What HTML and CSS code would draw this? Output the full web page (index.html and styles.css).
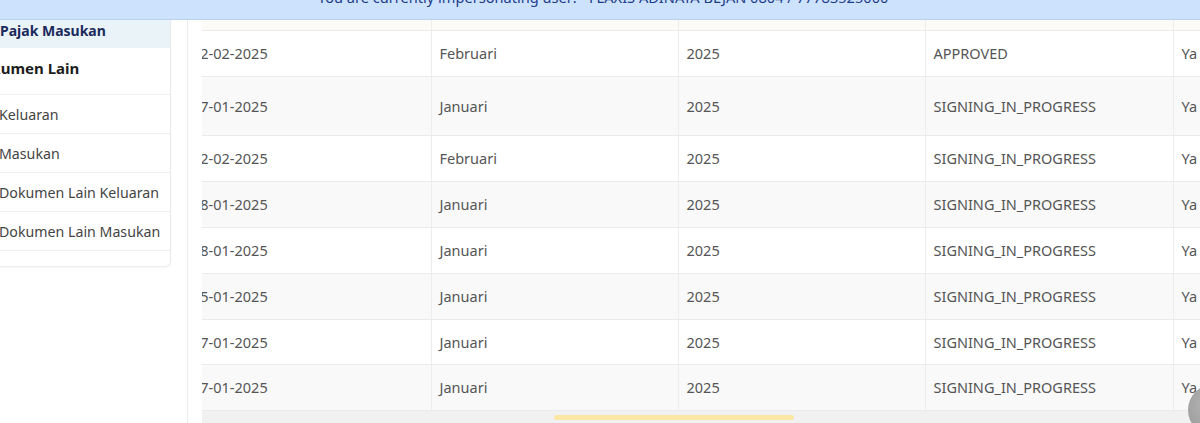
FILE: index.html
```html
<!DOCTYPE html>
<html lang="id">
<head>
  <meta charset="UTF-8">
  <meta name="viewport" content="width=device-width, initial-scale=1.0">
  <title>Dokumen Pajak</title>
  <link rel="stylesheet" href="styles.css">
</head>
<body>
  <div class="impersonate-bar">
    <div class="impersonate-text">You are currently impersonating user: - FLAXIS ADINATA BEJAN 0804 / 77783525000</div>
  </div>

  <div class="page">
    <aside class="sidebar">
      <div class="menu-item active">Pajak Masukan</div>
      <div class="menu-title">Dokumen Lain</div>
      <div class="menu-item">Keluaran</div>
      <div class="menu-item">Masukan</div>
      <div class="menu-item">Dokumen Lain Keluaran</div>
      <div class="menu-item">Dokumen Lain Masukan</div>
    </aside>

    <main class="content">
      <div class="table-scroll">
        <table class="doc-table">
          <colgroup>
            <col class="col-date">
            <col class="col-month">
            <col class="col-year">
            <col class="col-status">
            <col class="col-flag">
          </colgroup>
          <thead>
            <tr class="head-row">
              <th></th><th></th><th></th><th></th><th></th>
            </tr>
          </thead>
          <tbody>
            <tr><td>12-02-2025</td><td>Februari</td><td>2025</td><td>APPROVED</td><td>Ya</td></tr>
            <tr class="tall"><td>17-01-2025</td><td>Januari</td><td>2025</td><td>SIGNING_IN_PROGRESS</td><td>Ya</td></tr>
            <tr><td>12-02-2025</td><td>Februari</td><td>2025</td><td>SIGNING_IN_PROGRESS</td><td>Ya</td></tr>
            <tr><td>28-01-2025</td><td>Januari</td><td>2025</td><td>SIGNING_IN_PROGRESS</td><td>Ya</td></tr>
            <tr><td>28-01-2025</td><td>Januari</td><td>2025</td><td>SIGNING_IN_PROGRESS</td><td>Ya</td></tr>
            <tr><td>15-01-2025</td><td>Januari</td><td>2025</td><td>SIGNING_IN_PROGRESS</td><td>Ya</td></tr>
            <tr class="short"><td>17-01-2025</td><td>Januari</td><td>2025</td><td>SIGNING_IN_PROGRESS</td><td>Ya</td></tr>
            <tr><td>17-01-2025</td><td>Januari</td><td>2025</td><td>SIGNING_IN_PROGRESS</td><td>Ya</td></tr>
          </tbody>
        </table>
        <div class="h-scrollbar">
          <div class="h-thumb"></div>
        </div>
      </div>
    </main>
  </div>

  <div class="float-btn"></div>
</body>
</html>
```

FILE: styles.css
```css
html, body {
  margin: 0;
  height: 423px;
  overflow: hidden;
}

body {
  font-family: "Noto Sans", "Open Sans", sans-serif;
  font-size: 14px;
  color: #555;
  background-color: #fff;
}

.impersonate-bar {
  height: 19px;
  overflow: hidden;
  background-color: #cde2fc;
  border-bottom: 1px solid #b9d2f0;
  text-align: center;
}

.impersonate-text {
  margin-top: -13px;
  padding-left: 6px;
  font-size: 14.6px;
  line-height: 20px;
  color: #1d3d8a;
  white-space: nowrap;
}

.page {
  display: flex;
  height: 403px;
}

/* Sidebar */
.sidebar {
  width: 170px;
  height: 246px;
  flex-shrink: 0;
  overflow: hidden;
  background-color: #fff;
  border-right: 1px solid #e8e8e8;
  border-bottom: 1px solid #eee;
  border-bottom-right-radius: 6px;
  box-shadow: 0 1px 2px rgba(0, 0, 0, 0.04);
}

.menu-item {
  height: 38px;
  line-height: 40px;
  margin-left: -1px;
  border-bottom: 1px solid #f0f0f0;
  color: #444;
  font-size: 14.2px;
  white-space: nowrap;
}

.menu-item.active {
  height: 28px;
  line-height: 21px;
  margin-left: 0;
  background-color: #eaf3f8;
  color: #1b2a5c;
  font-weight: 700;
  font-size: 14px;
  border-bottom: none;
}

.menu-title {
  height: 46px;
  line-height: 41px;
  margin-left: -29px;
  border-bottom: 1px solid #f0f0f0;
  color: #1d1d1d;
  font-weight: 700;
  font-size: 15px;
  white-space: nowrap;
}

/* Content */
.content {
  flex: 1;
  min-width: 0;
  margin-left: 16px;
  padding-left: 14px;
  border-left: 1px solid #ececec;
}

.table-scroll {
  height: 403px;
  overflow: hidden;
}

.doc-table {
  width: 1300px;
  margin-left: -18px;
  border-collapse: collapse;
  table-layout: fixed;
  font-size: 14.5px;
}

.col-date,
.col-month,
.col-year {
  width: 247px;
}

.col-status {
  width: 248px;
}

.doc-table th,
.doc-table td {
  padding: 0 8px;
  text-align: left;
  white-space: nowrap;
  border-bottom: 1px solid #ebebeb;
  border-right: 1px solid #ededed;
}

.head-row th {
  height: 10px;
  background-color: #fdfbf8;
}

.doc-table td {
  height: 45px;
  line-height: 21px;
}

.doc-table tbody tr:nth-child(even) td {
  background-color: #f9f9f9;
}

.doc-table tr.tall td {
  height: 58px;
}

.doc-table tr.short td {
  height: 44px;
}

.h-scrollbar {
  height: 13px;
  margin-right: -20px;
  background-color: #f1f1f1;
  padding-top: 4px;
  box-sizing: border-box;
}

.h-thumb {
  width: 240px;
  height: 5px;
  margin-left: 352px;
  border-radius: 3px;
  background-color: #fbe6a3;
}

.float-btn {
  position: absolute;
  left: 1188px;
  top: 384px;
  width: 52px;
  height: 52px;
  border-radius: 50%;
  background: radial-gradient(circle at 40% 40%, #b5b5b5, #8f8f8f);
}
```
